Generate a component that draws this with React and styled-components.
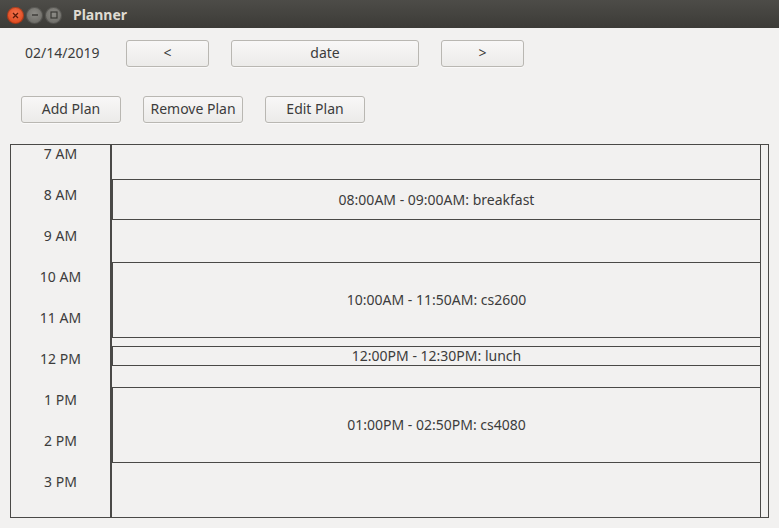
import React from "react";
import styled, { createGlobalStyle } from "styled-components";

const HOUR_PX = 41.68;
const FIRST_EVENT_TOP = 34;

const hours = ["7 AM", "8 AM", "9 AM", "10 AM", "11 AM", "12 PM", "1 PM", "2 PM", "3 PM"];

const plans = [
  { start: 8, end: 9, label: "08:00AM - 09:00AM: breakfast" },
  { start: 10, end: 11 + 50 / 60, label: "10:00AM - 11:50AM: cs2600" },
  { start: 12, end: 12.5, label: "12:00PM - 12:30PM: lunch" },
  { start: 13, end: 14 + 50 / 60, label: "01:00PM - 02:50PM: cs4080" },
];

const GlobalStyle = createGlobalStyle`
  html, body {
    margin: 0;
    padding: 0;
    background: #f2f1f0;
  }
  body {
    font-family: "Noto Sans", "Open Sans", sans-serif;
    font-size: 14px;
    color: #3c3c3c;
  }
`;

const Window = styled.div`
  width: 779px;
  height: 528px;
  display: flex;
  flex-direction: column;
  background: #f2f1f0;
  overflow: hidden;
`;

const TitleBar = styled.div`
  height: 28px;
  display: flex;
  align-items: center;
  padding-left: 7px;
  background: linear-gradient(#4d4c48, #3c3b37);
  box-sizing: border-box;
`;

const Controls = styled.div`
  display: flex;
  gap: 2px;
  margin-top: 2px;
`;

const WinButton = styled.div`
  width: 17px;
  height: 17px;
  border-radius: 50%;
  display: flex;
  align-items: center;
  justify-content: center;
  background: ${(p) =>
    p.$close
      ? "radial-gradient(circle at 50% 40%, #f4744f, #df4a1f 70%, #b33a18)"
      : "radial-gradient(circle at 50% 40%, #8c8b86, #6f6e69 70%, #5b5a56)"};
  box-shadow: inset 0 0 0 1px rgba(0, 0, 0, 0.25);
`;

const Title = styled.div`
  margin-left: 11px;
  font-family: "Noto Sans", sans-serif;
  font-weight: bold;
  font-size: 14px;
  color: #dfdbd2;
`;

const Body = styled.div`
  flex: 1;
  display: flex;
  flex-direction: column;
  padding: 12px 0 0 10px;
`;

const NavRow = styled.div`
  display: grid;
  grid-template-columns: 94px 83px 188px 83px;
  column-gap: 22px;
  align-items: center;
  height: 27px;
`;

const DateLabel = styled.div`
  padding: 0 0 2px 15px;
  white-space: nowrap;
`;

const Button = styled.button`
  height: 27px;
  width: ${(p) => p.$w || "auto"};
  box-sizing: border-box;
  border: 1px solid #b9b7b2;
  border-radius: 3px;
  background: linear-gradient(#f8f7f7, #ecebe9);
  box-shadow: 0 1px 0 rgba(255, 255, 255, 0.6);
  font-family: inherit;
  font-size: 14px;
  color: #3c3c3c;
  padding: 0 0 2px;
`;

const ActionRow = styled.div`
  display: flex;
  gap: 22px;
  margin: 29px 0 0 11px;
`;

const Table = styled.div`
  margin-top: 21px;
  width: 759px;
  height: 374px;
  box-sizing: border-box;
  border: 1px solid #4a4947;
  display: flex;
`;

const HourCol = styled.div`
  width: 99px;
  border-right: 2px solid #4a4947;
  overflow: hidden;
`;

const HourList = styled.div`
  margin-top: -12px;
  display: flex;
  flex-direction: column;
`;

const Hour = styled.div`
  height: 41px;
  line-height: 41px;
  text-align: center;
`;

const PlanCol = styled.div`
  flex: 1;
  position: relative;
  border-right: 1px solid #4a4947;
  overflow: hidden;
`;

const Plan = styled.div`
  position: absolute;
  left: 0;
  right: 0;
  box-sizing: border-box;
  border: 1px solid #4a4947;
  border-right: none;
  padding-bottom: 1px;
  display: flex;
  align-items: center;
  justify-content: center;
  white-space: nowrap;
`;

const ScrollStrip = styled.div`
  width: 7px;
  background: #f2f1f0;
`;

export default function App() {
  return (
    <Window>
      <GlobalStyle />
      <TitleBar>
        <Controls>
          <WinButton $close>
            <svg width="7" height="7" viewBox="0 0 7 7">
              <path d="M1 1L6 6M6 1L1 6" stroke="#5a1a08" strokeWidth="1.3" />
            </svg>
          </WinButton>
          <WinButton>
            <svg width="8" height="8" viewBox="0 0 8 8">
              <path d="M1 4H7" stroke="#3a3935" strokeWidth="1.4" />
            </svg>
          </WinButton>
          <WinButton>
            <svg width="8" height="8" viewBox="0 0 8 8">
              <rect x="1" y="1" width="6" height="6" fill="none" stroke="#3a3935" strokeWidth="1.2" />
            </svg>
          </WinButton>
        </Controls>
        <Title>Planner</Title>
      </TitleBar>
      <Body>
        <NavRow>
          <DateLabel>02/14/2019</DateLabel>
          <Button>&lt;</Button>
          <Button>date</Button>
          <Button>&gt;</Button>
        </NavRow>
        <ActionRow>
          <Button $w="100px">Add Plan</Button>
          <Button $w="100px">Remove Plan</Button>
          <Button $w="100px">Edit Plan</Button>
        </ActionRow>
        <Table>
          <HourCol>
            <HourList>
              {hours.map((h) => (
                <Hour key={h}>{h}</Hour>
              ))}
            </HourList>
          </HourCol>
          <PlanCol>
            {plans.map((p) => (
              <Plan
                key={p.label}
                style={{
                  top: Math.round(FIRST_EVENT_TOP + HOUR_PX * (p.start - 8)),
                  height: Math.floor(HOUR_PX * (p.end - p.start)),
                }}
              >
                {p.label}
              </Plan>
            ))}
          </PlanCol>
          <ScrollStrip />
        </Table>
      </Body>
    </Window>
  );
}
